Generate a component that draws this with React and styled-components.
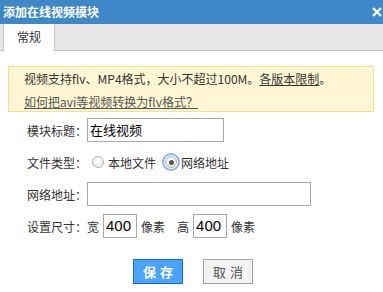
import styled, { createGlobalStyle } from 'styled-components';

const Global = createGlobalStyle`
  body {
    margin: 0;
    background: #fff;
    font-family: "Noto Sans CJK SC", "Liberation Sans", sans-serif;
    color: #333;
  }
`;

const Dialog = styled.div`
  width: 383px;
  height: 292px;
  background: #fff;
  overflow: hidden;
`;

const TitleBar = styled.div`
  height: 24px;
  background: #3f88c8;
  display: flex;
  align-items: center;
  justify-content: space-between;
  padding: 0 1px 0 3px;
`;

const Title = styled.div`
  color: #fff;
  font-size: 12px;
  font-weight: bold;
  line-height: 24px;
`;

const Close = styled.svg`
  width: 10px;
  height: 10px;
  margin-top: -1px;
`;

const Tabs = styled.div`
  height: 26px;
  background: #e6e6e6;
  border-bottom: 1px solid #c4c4c4;
  display: flex;
  align-items: flex-end;
  padding-left: 3px;
`;

const Tab = styled.div`
  width: 50px;
  height: 27px;
  margin-bottom: -1px;
  background: #fff;
  border-left: 1px solid #c4c4c4;
  border-right: 1px solid #c4c4c4;
  font-size: 12px;
  line-height: 26px;
  text-align: center;
  color: #333;
`;

const Notice = styled.div`
  margin: 15px 9px 0 8px;
  height: 44px;
  background: #fff6d3;
  border: 1px solid #f3df95;
  padding: 0 0 0 15px;
  font-size: 12px;
  line-height: 23px;
  color: #333;
`;

const Link = styled.a`
  color: ${p => p.$muted ? '#555' : '#333'};
  text-decoration: underline;
  cursor: pointer;
`;

const Form = styled.div`
  display: flex;
  flex-direction: column;
  gap: 8px;
  margin-top: 6px;
  padding-left: 27px;
`;

const Row = styled.div`
  display: flex;
  align-items: center;
  height: 24px;
  font-size: 12px;
  color: #333;
`;

const Label = styled.div`
  width: 60px;
  flex-shrink: 0;
`;

const Input = styled.div`
  box-sizing: border-box;
  width: ${p => p.$w}px;
  height: 24px;
  border: 1px solid #a9a9a9;
  font-size: ${p => p.$size || 13}px;
  line-height: 22px;
  padding-left: 2px;
  color: #000;
  margin: 0 ${p => p.$mr || 0}px 0 ${p => p.$ml || 0}px;
`;

const Num = styled(Input)`
  font-family: "Liberation Sans", sans-serif;
`;

const Radio = styled.span`
  box-sizing: border-box;
  width: 12px;
  height: 12px;
  border-radius: 50%;
  border: 1px solid #b4b4b4;
  background: radial-gradient(circle at 50% 40%, #fff 0%, #e4e4e4 100%);
  display: inline-flex;
  align-items: center;
  justify-content: center;
  margin: 0 4px 0 ${p => p.$ml}px;
  outline: ${p => p.$checked ? '2px solid #8ab6ee' : 'none'};
  outline-offset: 1px;
  &::after {
    content: "";
    display: ${p => p.$checked ? 'block' : 'none'};
    width: 5px;
    height: 5px;
    border-radius: 50%;
    background: #555;
  }
`;

const Unit = styled.span`
  margin-right: ${p => p.$mr || 0}px;
`;

const Buttons = styled.div`
  display: flex;
  gap: 20px;
  padding-left: 133px;
  margin-top: 21px;
`;

const Button = styled.button`
  box-sizing: border-box;
  width: 50px;
  height: 25px;
  padding: 0 0 0 4px;
  font-family: "Noto Sans CJK SC", sans-serif;
  font-size: 13px;
  letter-spacing: 4px;
  font-weight: ${p => p.$primary ? 'bold' : 'normal'};
  color: ${p => p.$primary ? '#fff' : '#555'};
  background: ${p => p.$primary ? '#4aa4fb' : '#f3f3f3'};
  border: 1px solid ${p => p.$primary ? '#1a6dbb' : '#a0a0a0'};
`;

export default function App() {
  return (
    <Dialog>
      <Global />
      <TitleBar>
        <Title>添加在线视频模块</Title>
        <Close viewBox="0 0 10 10">
          <path d="M1 1 L9 9 M9 1 L1 9" stroke="#fff" strokeWidth="2.2" />
        </Close>
      </TitleBar>
      <Tabs>
        <Tab>常规</Tab>
      </Tabs>
      <Notice>
        <div>视频支持flv、MP4格式，大小不超过100M。<Link>各版本限制</Link>。</div>
        <div><Link $muted>如何把avi等视频转换为flv格式？</Link></div>
      </Notice>
      <Form>
        <Row>
          <Label>模块标题：</Label>
          <Input $w={137}>在线视频</Input>
        </Row>
        <Row>
          <Label>文件类型：</Label>
          <Radio $ml={5} />
          <Unit $mr={8}>本地文件</Unit>
          <Radio $ml={1} $checked />
          <Unit>网络地址</Unit>
        </Row>
        <Row>
          <Label>网络地址：</Label>
          <Input $w={224} />
        </Row>
        <Row>
          <Label>设置尺寸：</Label>
          <span>宽</span>
          <Num $w={34} $size={15} $ml={4} $mr={4}>400</Num>
          <Unit $mr={12}>像素</Unit>
          <span>高</span>
          <Num $w={34} $size={15} $ml={4} $mr={4}>400</Num>
          <Unit>像素</Unit>
        </Row>
      </Form>
      <Buttons>
        <Button $primary>保存</Button>
        <Button>取消</Button>
      </Buttons>
    </Dialog>
  );
}
